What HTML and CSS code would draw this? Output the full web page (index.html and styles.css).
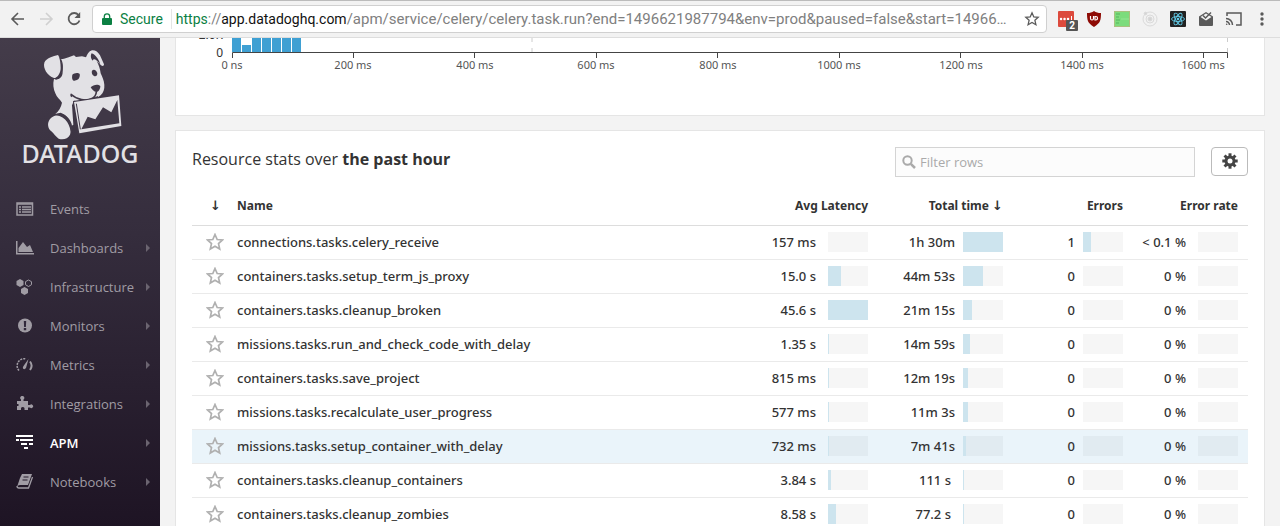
FILE: index.html
```html
<!DOCTYPE html>
<html lang="en">
<head>
<meta charset="utf-8">
<title>Datadog APM</title>
<link rel="stylesheet" href="styles.css">
</head>
<body>
<header class="browser">
  <div class="nav-group">
    <button class="nav-btn" aria-label="Back"><svg width="16" height="16" viewBox="0 0 16 16" fill="none" stroke="#5a5a5a" stroke-width="1.6"><path d="M14 8H2M8 2L2 8l6 6"/></svg></button>
    <button class="nav-btn" aria-label="Forward" disabled><svg width="16" height="16" viewBox="0 0 16 16" fill="none" stroke="#d0d0d0" stroke-width="1.6"><path d="M2 8h12M8 2l6 6-6 6"/></svg></button>
    <button class="nav-btn" aria-label="Reload"><svg width="16" height="16" viewBox="0 0 16 16" fill="none" stroke="#5a5a5a" stroke-width="1.8"><path d="M12.500 4A5.600 5.600 0 1 0 13.500 9.500"/><path d="M14.200 1v6H8.500z" fill="#5a5a5a" stroke="none"/></svg></button>
  </div>
  <div class="omnibox">
    <svg class="lock" width="10" height="13" viewBox="0 0 10 13"><path d="M1 5h8q1 0 1 1v5q0 1-1 1H1q-1 0-1-1V6q0-1 1-1z" fill="#0b8043"/><path d="M2.300 6V3.500a2.700 2.700 0 0 1 5.400 0V6" fill="none" stroke="#0b8043" stroke-width="1.300"/></svg>
    <span class="secure">Secure</span>
    <div class="url"><span class="origin"><span class="scheme">https</span>://<span class="host">app.datadoghq.com</span></span>/apm/service/celery/celery.task.run?end=1496621987794&amp;env=prod&amp;paused=false&amp;start=14966…</div>
    <button aria-label="Bookmark"><svg width="16" height="16" viewBox="0 0 16 16" fill="none" stroke="#5a5a5a" stroke-width="1.300"><path d="M8 1.800l1.800 4.100 4.400.4-3.300 3 1 4.400L8 11.400l-3.900 2.300 1-4.400-3.300-3 4.400-.4z"/></svg></button>
  </div>
  <div class="extensions">
    <button class="icon-btn" aria-label="Password manager, 2"><svg width="16" height="16" viewBox="0 0 16 16"><rect width="16" height="16" rx="1" fill="#dc4a3d"/><path d="M3 8h.1M6.500 8h.1M10 8h.1" stroke="#fff" stroke-width="2.400" stroke-linecap="round"/><path d="M13.500 5v5" stroke="#fff"/></svg><span class="ext-count">2</span></button>
    <button class="icon-btn" aria-label="Content blocker"><svg width="16" height="18" viewBox="0 0 16 18"><path d="M8 1c2 1.500 4 2 7 2 0 7-.5 10-7 14C1.500 13 1 10 1 3c3 0 5-.5 7-2z" fill="#8e0b05"/><path d="M4.500 6v2.500a1.500 1.500 0 0 0 3 0V6M9 6.500v3.500h.8a1.750 1.750 0 0 0 0-3.500z" fill="none" stroke="#fff" stroke-width="1.200"/></svg></button>
    <button class="icon-btn" aria-label="Sheet"><svg width="16" height="16" viewBox="0 0 16 16"><rect x=".5" y=".5" width="15" height="15" fill="#7cdc7c" stroke="#a9c07e"/><path d="M2 3h4M2 6h3M2 9h4M2 12h3" stroke="#56b45c"/><path d="M7 8h8" stroke="#94e594"/></svg></button>
    <button class="icon-btn" aria-label="Orbit"><svg width="16" height="16" viewBox="0 0 16 16" fill="none" stroke="#dadada"><circle cx="8" cy="8" r="7"/><circle cx="8" cy="8" r="4"/><circle cx="8" cy="8" r="2" fill="#d4d4d4"/><circle cx="3.500" cy="2.500" r="1.300" fill="#d4d4d4"/></svg></button>
    <button class="icon-btn" aria-label="React tools"><svg width="16" height="16" viewBox="0 0 16 16"><rect width="16" height="16" rx="1" fill="#222"/><g fill="none" stroke="#61cbe8" stroke-width=".9"><ellipse cx="8" cy="8" rx="6.500" ry="2.500"/><ellipse cx="8" cy="8" rx="6.500" ry="2.500" transform="rotate(60 8 8)"/><ellipse cx="8" cy="8" rx="6.500" ry="2.500" transform="rotate(120 8 8)"/></g><circle cx="8" cy="8" r="1.300" fill="#61cbe8"/></svg></button>
    <button class="icon-btn" aria-label="Mail checker"><svg width="16" height="16" viewBox="0 0 16 16"><path d="M1 5.500L8 1l7 4.500V14q0 1-1 1H2q-1 0-1-1z" fill="#5a5a5a"/><path d="M2.500 6L8 2.500 13.500 6 8 9.500z" fill="#f2f2f2"/><path d="M5 4.500L7.500 7 13 1.500" fill="none" stroke="#5a5a5a" stroke-width="1.500"/></svg></button>
    <button class="icon-btn" aria-label="Cast"><svg width="18" height="16" viewBox="0 0 18 16" fill="none" stroke="#5a5a5a" stroke-width="1.500"><path d="M2 5V2h14v12h-5M1 7.500A6.500 6.500 0 0 1 7.500 14M1 10.500A3.500 3.500 0 0 1 4.500 14"/><circle cx="1.700" cy="13.300" r=".8" fill="#5a5a5a" stroke="none"/></svg></button>
    <button class="icon-btn" aria-label="Menu"><svg width="16" height="16" viewBox="0 0 16 16" fill="#5a5a5a"><circle cx="8" cy="3" r="1.700"/><circle cx="8" cy="8" r="1.700"/><circle cx="8" cy="13" r="1.700"/></svg></button>
  </div>
</header>
<div class="app">
  <aside class="sidebar">
    <a class="logo" href="#" aria-label="Datadog">
      <svg width="100" height="96" viewBox="-30 0 300 288">
        <g fill="#e2e1e5">
          <path d="M63 40L72 38 86 34 94 31 102 28 108 33 126 31 138 34C142 24 146 16 156 13 166 12 174 18 180 28L192 55C192 60 188 61 183 58L170 46C176 56 180 68 182 82 187 94 192 102 193 116 194 130 190 140 182 148L170 156C160 168 145 172 130 168L102 164 96 178 100 236 94 240C90 222 80 206 62 200L46 204C56 196 64 182 66 170 60 160 50 154 46 142 40 128 38 114 42 98 56 104 68 94 68 78 69 64 70 50 63 40z"/>
          <path d="M54 27C40 30 18 36 13 50 8 66 22 88 40 95 50 98 60 92 66 76 66 60 64 40 54 27z"/>
          <path d="M30 219C42 206 66 202 82 216 96 230 98 252 90 266 84 278 70 282 56 278 46 272 42 262 34 256 24 248 20 232 30 219z"/>
        </g>
        <g fill="#403847">
          <path d="M56 30C70 46 72 80 58 96 54 101 46 102 42 98 54 94 62 80 62 66 62 52 60 40 56 30z"/>
          <path d="M155 22C150 30 154 40 158 44 160 36 168 38 181 56 178 42 168 30 160 24z"/>
          <path d="M48 204C70 200 88 212 95 234 98 246 97 260 92 268 93 238 78 212 48 208z"/>
          <path d="M97 86C102 81 114 78 119 84 121 92 116 102 108 103 100 106 94 102 97 86z"/>
          <path d="M156 74C162 68 170 74 172 82 172 89 168 92 162 90 156 86 154 80 156 74z"/>
          <path d="M152 124C160 116 174 114 181 120 181 130 174 139 168 138 160 136 156 130 152 124z"/>
        </g>
        <path d="M92 144C112 162 138 166 154 158 164 154 168 150 169 138M94 144Q92 149 96 152M174 152Q166 158 152 163" fill="none" stroke="#403847" stroke-width="5"/>
        <path d="M99 165L240 145 248 242 113 266z" fill="#403847"/>
        <path d="M102 168L237 148 244 240 118 262zM124 250L238 232 232 162 214 199 189 184 166 220 143 212z" fill="#e2e1e5" fill-rule="evenodd"/>
        <path d="M109 173L121 250" stroke="#403847" stroke-width="3"/>
      </svg>
      <span class="wordmark">DATADOG</span>
    </a>
    <nav class="menu">
      <a href="#"><svg width="18" height="16" viewBox="0 0 18 16"><path d="M1 2h15.500v12H1z" fill="none" stroke="currentColor" stroke-width="1.500"/><path d="M1 3h16M3 6h2M6 6h9M3 8.500h2M6 8.500h9M3 11h2M6 11h9" stroke="currentColor" stroke-width="1.500"/></svg><span>Events</span></a>
      <a href="#" class="more"><svg width="18" height="16" viewBox="0 0 18 16" fill="currentColor"><path d="M0 1h1.500v12H18v1.500H0zM2.500 12V8L7 2l4 5 3-2 3 7z"/></svg><span>Dashboards</span></a>
      <a href="#" class="more"><svg width="18" height="16" viewBox="0 0 18 16" fill="currentColor"><path d="M4 0l3.500 2v4L4 8 .5 6V2zM8.500 8L12 10v4l-3.500 2L5 14v-4z"/><path d="M12.500 1l3 1.700v3L12.500 7.500l-3-1.800v-3z" fill="none" stroke="currentColor"/></svg><span>Infrastructure</span></a>
      <a href="#" class="more"><svg width="18" height="16" viewBox="0 0 18 16"><circle cx="9" cy="7.500" r="7" fill="currentColor"/><path d="M7.800 3h2.400l-.3 6H8.100zM7.800 10h2.400v2.200H7.800z" fill="#30283a"/></svg><span>Monitors</span></a>
      <a href="#" class="more"><svg width="18" height="16" viewBox="0 0 18 16" fill="none" stroke="currentColor" stroke-width="2"><path d="M3 13.500A7 7 0 0 1 10 2" stroke-width="1.500" stroke-dasharray="2 1"/><path d="M14 4.500a7 7 0 0 1 0 8.500"/><path d="M12.500 2L10 11q-1.500 2-3 .5-.5-1.500.5-2.500z" fill="currentColor" stroke="none"/></svg><span>Metrics</span></a>
      <a href="#" class="more"><svg width="18" height="16" viewBox="0 0 18 16" fill="currentColor"><path d="M1 5h4V3.500a2 2 0 1 1 2.500 0V5H12v4h2a1.800 1.800 0 1 1 0 2.500h-2V14H8.500v-2a2 2 0 0 0-3.500 0v2H1v-4h1.500V8H1z"/></svg><span>Integrations</span></a>
      <a href="#" class="more active"><svg width="18" height="16" viewBox="0 0 18 16" fill="currentColor"><path d="M0 0h17v2H0zM4 4h13v2H4zM0 4h3v2H0zM5 8h6v2H5zM13 8h4v2h-4zM8 12h4v2H8z"/></svg><span>APM</span></a>
      <a href="#" class="more"><svg width="18" height="16" viewBox="0 0 18 16"><path d="M6 0h10l-4 11H4q-2 0-3 2l3-9z" fill="currentColor"/><path d="M1 12q0 2 2 2h9.500L16.500 3" fill="none" stroke="currentColor" stroke-width="1.300"/><path d="M7.500 3h5M6.500 6h5" stroke="#241b2b"/></svg><span>Notebooks</span></a>
    </nav>
  </aside>
  <main class="content">
    <section class="panel chart-panel">
      <svg class="chart" viewBox="0 0 1056 45" role="img" aria-label="Latency distribution">
        <g fill="#3fa0d3"><path d="M40 0h9v14h-9zM50 7h9v7h-9zM60 0h9v14h-9zM70 0h9v14h-9zM80 0h9v14h-9zM90 0h9v14h-9zM100 0h9v14h-9z"/></g>
        <path d="M340 0v14M1035.500 0v14" stroke="#ccc" stroke-dasharray="4 6" fill="none"/>
        <path d="M40.500 20v-5.500h995V20M161.500 15v5M282.500 15v5M404.500 15v5M525.500 15v5M647.500 15v5M768.500 15v5M890.500 15v5M1011.500 15v5" fill="none" stroke="#444"/>
        <text class="y-label" x="31" y="1" text-anchor="end">2.0K</text><text class="y-label" x="31" y="19" text-anchor="end">0</text>
        <g class="x-label" text-anchor="middle"><text x="40" y="31">0 ns</text><text x="161" y="31">200 ms</text><text x="283" y="31">400 ms</text><text x="404" y="31">600 ms</text><text x="526" y="31">800 ms</text><text x="647" y="31">1000 ms</text><text x="769" y="31">1200 ms</text><text x="890" y="31">1400 ms</text><text x="1011" y="31">1600 ms</text></g>
      </svg>
    </section>
    <section class="panel stats">
      <div class="stats-head">
        <h1>Resource stats over <strong>the past hour</strong></h1>
        <label class="filter"><svg width="14" height="14" viewBox="0 0 14 14" fill="none" stroke="#aaa" stroke-width="2"><circle cx="5.500" cy="5.500" r="4.200"/><path d="M8.800 8.800L13 13" stroke-width="2.500"/></svg><input type="text" placeholder="Filter rows" aria-label="Filter rows"></label>
        <button class="gear" aria-label="Settings"><svg width="16" height="16" viewBox="-8 -8 16 16"><g fill="#444"><circle r="5.500"/><path id="tooth" d="M-1.500-7.700h3v15.400h-3z"/><use href="#tooth" transform="rotate(45)"/><use href="#tooth" transform="rotate(90)"/><use href="#tooth" transform="rotate(135)"/></g><circle r="2.500" fill="#fff"/></svg></button>
      </div>
      <table>
        <colgroup><col class="c-star"><col><col class="c-latency"><col class="c-total"><col class="c-errors"><col class="c-rate"></colgroup>
        <thead><tr><th class="star"><span class="arrow">↓</span></th><th class="name">Name</th><th>Avg Latency</th><th>Total time <span class="arrow">↓</span></th><th>Errors</th><th>Error rate</th></tr></thead>
        <tbody id="rows"></tbody>
      </table>
    </section>
  </main>
</div>
<script src="rows.js"></script>
</body>
</html>
```
FILE: rows.js
```js
const rows = [
  ["connections.tasks.celery_receive", "157 ms", 0, "1h 30m", 100, "1", 20, "< 0.1 %"],
  ["containers.tasks.setup_term_js_proxy", "15.0 s", 33, "44m 53s", 50, "0", 0, "0 %"],
  ["containers.tasks.cleanup_broken", "45.6 s", 100, "21m 15s", 23, "0", 0, "0 %"],
  ["missions.tasks.run_and_check_code_with_delay", "1.35 s", 3, "14m 59s", 17, "0", 0, "0 %"],
  ["containers.tasks.save_project", "815 ms", 2, "12m 19s", 13, "0", 0, "0 %"],
  ["missions.tasks.recalculate_user_progress", "577 ms", 1, "11m 3s", 12, "0", 0, "0 %"],
  ["missions.tasks.setup_container_with_delay", "732 ms", 2, "7m 41s", 8, "0", 0, "0 %"],
  ["containers.tasks.cleanup_containers", "3.84 s", 8, "111 s", 2, "0", 0, "0 %"],
  ["containers.tasks.cleanup_zombies", "8.58 s", 19, "77.2 s", 1, "0", 0, "0 %"]
];
const star = '<svg width="18" height="18" viewBox="0 0 18 18" fill="none" stroke="#b0b0b0" stroke-width="1.7"><path d="M9 1.500l2.200 5 5.300.5-4 3.600 1.200 5.400L9 13.200 4.300 16l1.200-5.400-4-3.600 5.300-.5z"/></svg>';
const metric = (column, text, share) => {
  const seconds = / s$/.test(text) ? " seconds" : "";
  return `<td><div class="metric ${column}${seconds}"><span>${text.replace("<", "&lt;")}</span><span class="bar"><span class="fill" style="width:${share}%"></span></span></div></td>`;
};
document.getElementById("rows").innerHTML = rows.map((r, i) =>
  `<tr${i === 6 ? ' class="hovered"' : ""}><td class="star"><button aria-label="Star ${r[0]}">${star}</button></td><td class="name">${r[0]}</td>${metric("latency", r[1], r[2])}${metric("total", r[3], r[4])}${metric("errors", r[5], r[6])}${metric("rate", r[7], 0)}</tr>`
).join("");
```
FILE: styles.css
```css
* { box-sizing: border-box; }
html, body { height: 100%; }
body { margin: 0; display: flex; flex-direction: column; overflow: hidden; font-family: "Noto Sans", "Open Sans", sans-serif; color: #333; background: #f3f3f3; }
button { display: block; border: 0; padding: 0; background: none; font: inherit; color: inherit; }
a { color: inherit; text-decoration: none; }
svg { display: block; flex: none; }

.browser { flex: none; height: 38px; display: flex; align-items: center; padding: 0 4px 0 10px; background: #f2f2f2; border-top: 1px solid #bbb; border-bottom: 1px solid #ddd; }
.nav-group { display: flex; gap: 12px; margin-right: 10px; }
.nav-btn { width: 16px; }
.omnibox { flex: 1; min-width: 0; height: 28px; display: flex; align-items: center; padding: 0 6px 0 9px; background: #fff; border: 1px solid #d0d0d0; border-radius: 4px; font: 15px/20px Roboto, sans-serif; }
.secure { padding: 0 8px; margin-right: 4px; color: #0b8043; border-right: 1px solid #e5e5e5; font-size: 14px; }
.url { flex: 1; min-width: 0; overflow: hidden; white-space: nowrap; color: #808080; }
.origin { font-size: 14px; }
.scheme { color: #0b8043; }
.host { color: #111; }
.extensions { display: flex; align-items: center; margin-left: 5px; }
.icon-btn { position: relative; width: 28px; display: grid; place-items: center; }
.ext-count { position: absolute; right: 2px; bottom: -4px; padding: 0 3px; background: #555; color: #fff; font: bold 10px/11px Roboto, sans-serif; border-radius: 1px; }

.app { flex: 1; min-height: 0; display: flex; }
.sidebar { flex: none; width: 160px; background: linear-gradient(#443c4a, #352d3d 40%, #1e1424); color: #a09ca4; }
.logo { display: flex; flex-direction: column; align-items: center; padding-top: 8px; color: #e2e1e5; }
.wordmark { font: 500 25px/22px "Noto Sans", sans-serif; }
.menu { display: flex; flex-direction: column; padding-top: 25px; }
.menu a { height: 39px; display: flex; align-items: center; gap: 16px; padding: 0 10px 0 16px; font: 13px/20px "Open Sans", sans-serif; }
.menu span { flex: 1; min-width: 0; }
.menu .more::after { content: ""; border: 4px solid transparent; border-left-color: #6b6470; border-right: 0; }
.menu .active { color: #fff; font-weight: 600; }

.content { flex: 1; min-width: 0; display: flex; flex-direction: column; gap: 14px; padding: 0 15px; }
.panel { background: #fff; border: 1px solid #e5e5e5; }
.chart-panel { flex: none; border-top: 0; padding: 0 16px 32px; }
.chart { width: 100%; height: auto; overflow: hidden; }
.x-label { font-size: 11px; fill: #555; }
.y-label { font-size: 12px; fill: #333; }
.stats { flex: 1; padding: 16px 16px 0; }
.stats-head { display: flex; align-items: flex-start; gap: 16px; }
h1 { flex: 1; margin: 0; font: 16px/24px "Open Sans", sans-serif; }
.filter { width: 300px; height: 30px; display: flex; align-items: center; gap: 4px; padding: 0 6px; border: 1px solid #d4d4d4; background: #fcfcfc; }
.filter input { flex: 1; min-width: 0; border: 0; padding: 0; outline: 0; background: none; font: 13px/20px "Open Sans", sans-serif; }
.filter input::placeholder { color: #aaa; }
.gear { width: 37px; height: 29px; display: grid; place-items: center; padding-bottom: 2px; border: 1px solid #bbb; border-radius: 4px; background: #fff; }

table { width: 100%; table-layout: fixed; border-collapse: collapse; margin-top: 8px; }
.c-star { width: 45px; }
.c-latency { width: 135px; }
.c-total { width: 135px; }
.c-errors { width: 120px; }
.c-rate { width: 115px; }
th { height: 40px; padding: 2px 10px 0; text-align: right; font-size: 12px; line-height: 20px; border-bottom: 1px solid #ddd; white-space: nowrap; }
td { height: 34px; padding: 0 10px; font-size: 13px; font-weight: 500; line-height: 20px; border-bottom: 1px solid #eaeaea; white-space: nowrap; }
.arrow { font: bold 13px/20px "DejaVu Sans", sans-serif; }
.name { padding-left: 0; padding-right: 0; text-align: left; }
.star { padding-left: 14px; padding-right: 0; text-align: left; }
th.star { padding-left: 18px; }
.metric { display: flex; align-items: center; justify-content: flex-end; gap: 8px; }
.latency, .rate { gap: 12px; }
.total.seconds { gap: 12px; }
.bar { flex: none; width: 40px; height: 20px; background: rgba(0, 0, 0, .035); }
.fill { display: block; height: 100%; background: #cde4ee; }
.hovered { background: #eaf4fa; }
```
